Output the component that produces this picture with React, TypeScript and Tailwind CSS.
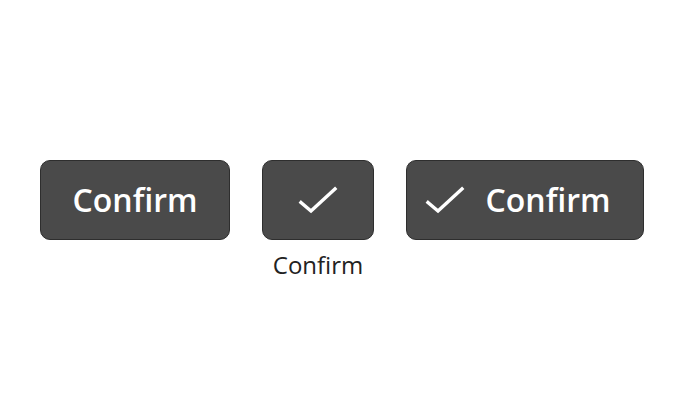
function Check({ className }: { className?: string }) {
  return (
    <svg viewBox="0 0 40 30" className={className} fill="none">
      <path d="M3 17.5 L13 26 L37 4" stroke="white" strokeWidth="3.4" strokeLinecap="square" strokeLinejoin="miter" />
    </svg>
  );
}

const btn =
  "flex h-[80px] items-center justify-center rounded-[10px] border border-[#2e2e2e] bg-[#4a4a4a] text-white font-semibold text-[32px] leading-none";

export default function App() {
  return (
    <main
      className="flex h-[400px] w-full items-start justify-center gap-8 bg-white pt-[160px]"
      style={{ fontFamily: '"Open Sans", "Noto Sans", sans-serif' }}
    >
      <button className={`${btn} w-[190px]`}>Confirm</button>

      <div className="flex flex-col items-center">
        <button className={`${btn} w-[112px]`} aria-label="Confirm">
          <Check className="h-[30px] w-[40px]" />
        </button>
        <span className="mt-[11px] text-[24px] leading-[28px] text-[#222]">Confirm</span>
      </div>

      <button className={`${btn} w-[238px] gap-[21px] pr-[15px]`}>
        <Check className="h-[30px] w-[40px]" />
        <span>Confirm</span>
      </button>
    </main>
  );
}
